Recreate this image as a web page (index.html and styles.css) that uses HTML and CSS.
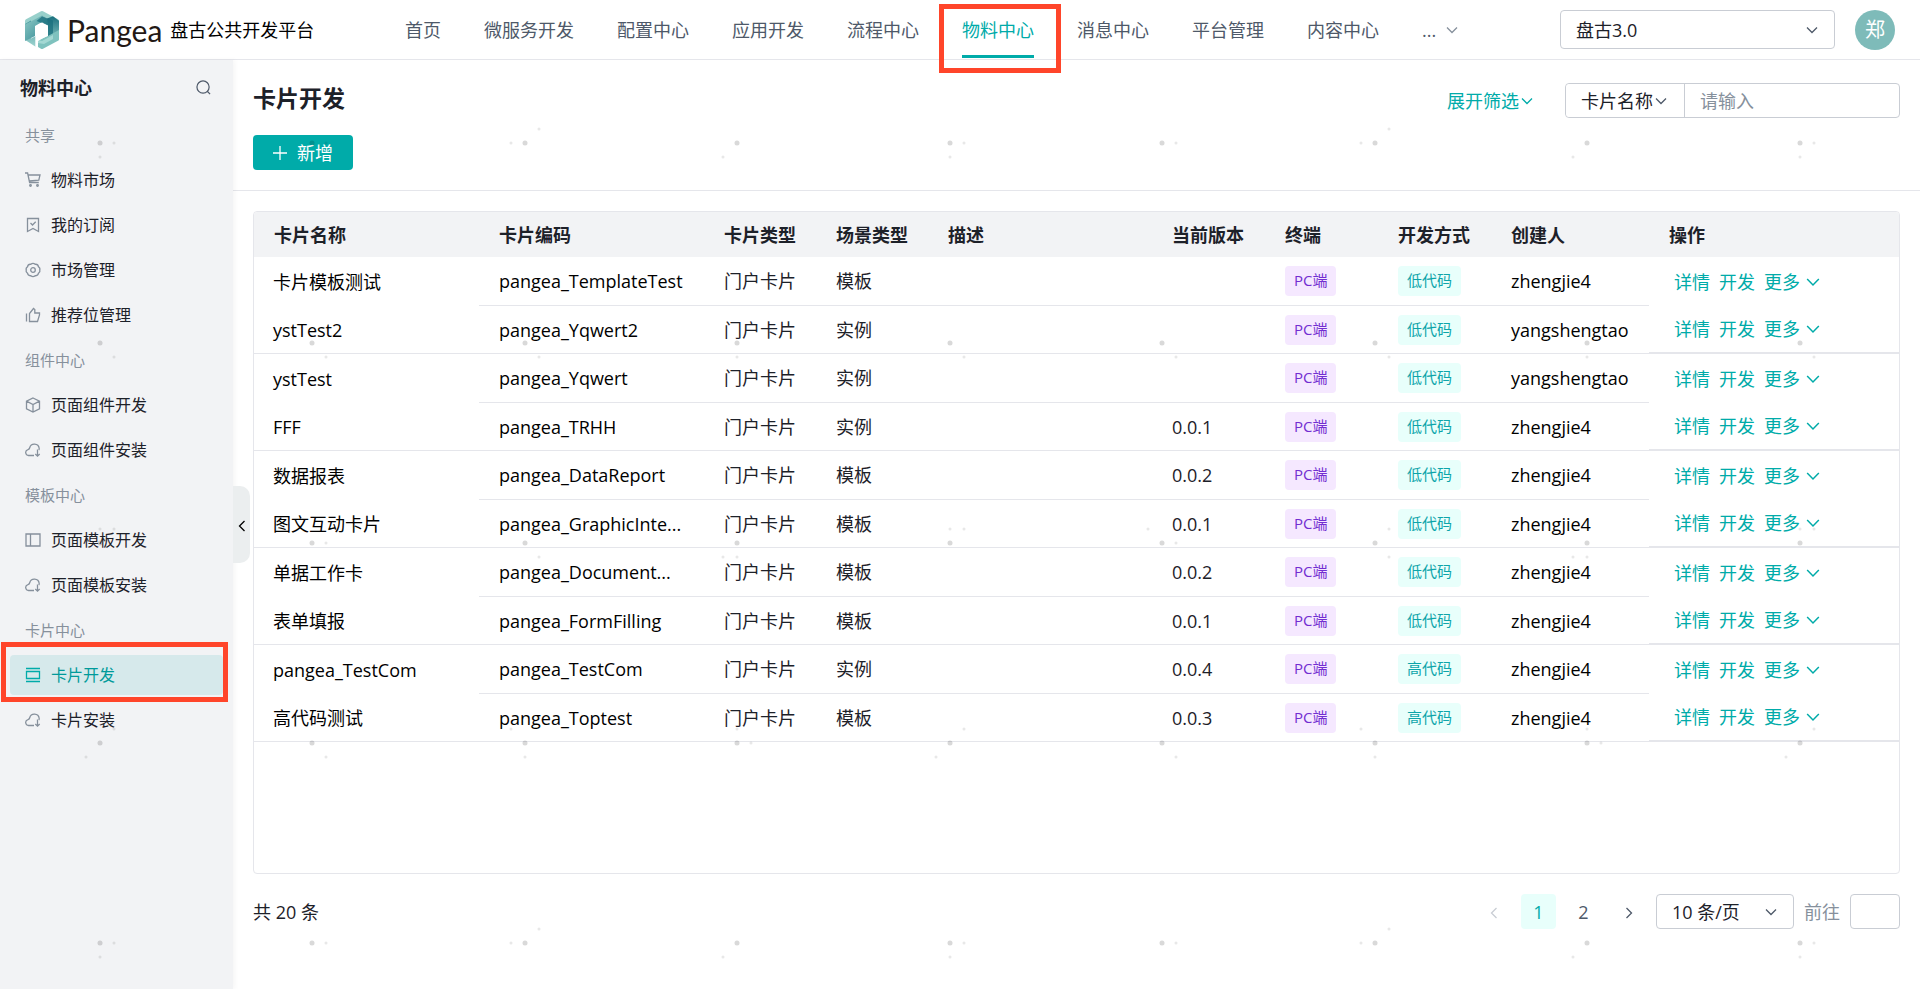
FILE: index.html
```html
<!DOCTYPE html>
<html lang="zh-CN">
<head>
<meta charset="UTF-8">
<title>卡片开发</title>
<link rel="stylesheet" href="styles.css">
</head>
<body>
<!-- 图标 -->
<svg class="sprite" aria-hidden="true">
  <symbol id="down" viewBox="0 0 12 12"><path d="M1 3.5l5 5 5-5"/></symbol>
  <symbol id="left" viewBox="0 0 12 12"><path d="M8.5 1l-5 5 5 5"/></symbol>
  <symbol id="right" viewBox="0 0 12 12"><path d="M3.5 1l5 5-5 5"/></symbol>
  <symbol id="search" viewBox="0 0 16 16"><circle cx="7.5" cy="7.5" r="6.5"/><path d="M12 12l3 3"/></symbol>
  <symbol id="cart" viewBox="0 0 16 16"><path d="M0 1h2.6l2 9.5h9.2M3 3h12l-1.2 5.2L4.2 9"/><circle cx="5.5" cy="13.5" r=".8"/><circle cx="12.5" cy="13.5" r=".8"/></symbol>
  <symbol id="mark" viewBox="0 0 16 16"><path d="M2.5 1.5h11v13L8 11.5l-5.500 3zM5.500 6l2 2 3.200-3.200"/></symbol>
  <symbol id="gear" viewBox="0 0 16 16"><path d="M5.800 2.300Q8 .4 10.200 2.300 13 2 13.500 4.800 15.600 6.500 14.600 8 15.600 9.500 13.500 11.200 13 14 10.200 13.700 8 15.600 5.800 13.700 3 14 2.500 11.200.4 9.500 1.400 8 .4 6.500 2.500 4.800 3 2 5.800 2.300z"/><circle cx="8" cy="8" r="2.300"/></symbol>
  <symbol id="thumb" viewBox="0 0 16 16"><path d="M1.500 6.500v8M4.500 6.500v8h8l2-6.500V6H9.800V2.500L8.500 1.500z"/></symbol>
  <symbol id="cube" viewBox="0 0 16 16"><path d="M8 1l6.500 3.200v7.600L8 15l-6.500-3.200V4.200zM1.500 4.200L8 7.500l6.500-3.300M8 7.500V15"/></symbol>
  <symbol id="cloud" viewBox="0 0 16 16"><path d="M9 13.500H4a3 3 0 0 1-1-5.900C4 7.400 4.500 7 4.800 5.500 6 .9 13.500.9 14.200 6.500c0 .6 0 1-.4 1.500M12.500 7.500v6.500M10.300 12l2.200 2.200 2.200-2.200"/></symbol>
  <symbol id="panel" viewBox="0 0 16 16"><path d="M1 2h14v12H1zM5.500 2v12"/></symbol>
  <symbol id="card" viewBox="0 0 16 16"><path d="M1 1.500h14M1 14.500h14M1.500 4.500h13v7h-13z"/></symbol>
</svg>

<header class="topbar">
  <a class="brand" href="#">
    <svg class="logo" viewBox="0 0 34 38">
      <defs>
        <linearGradient id="g1" x1="0" y1="0" x2="1" y2="1"><stop offset="0" stop-color="#8fcac6"/><stop offset="1" stop-color="#2d8590"/></linearGradient>
        <linearGradient id="g2" x1="0" y1="0" x2="0" y2="1"><stop offset="0" stop-color="#1a6f7e"/><stop offset="1" stop-color="#8bc9c4"/></linearGradient>
        <linearGradient id="g3" x1="0" y1="0" x2="0" y2="1"><stop offset="0" stop-color="#3e929a"/><stop offset="1" stop-color="#a0d5d0"/></linearGradient>
      </defs>
      <path fill="#98d0cb" d="M16 .3q1-.5 2 0l15 8q1 .6 1 2v3L17 5 0 14v-4q0-1.200 1-1.800z"/>
      <path fill="url(#g3)" d="M0 13l6-3.500v18L11 25v11L1 29.500q-1-.7-1-2z"/>
      <path fill="url(#g1)" d="M0 13.500L17 4.500l7 4v6L17 11l-7 4v10L0 30z"/>
      <path fill="url(#g2)" d="M22 7.500l6-2.200 6 4.500V28q0 1-1 1.600L23 31V13.500z"/>
      <path fill="#1a6f7e" d="M17 5.500l11 4v13.500l-5 3.500V14.500L11.500 10z" opacity=".75"/>
      <path fill="#7fc2be" d="M34 19v9q0 1.200-1 1.800l-15 8q-1 .5-2 0l-3-1.800V29l10-4z"/>
      <path fill="#a4d8d3" d="M13 29l4 1 11-6v4l-9 5-6-1z"/>
      <path fill="#fff" d="M17 11.500l6 3.500v9.500L13 30l-1.500-2v10l-1.200-.8V15.500z"/>
    </svg>
    <span class="wordmark">Pangea</span>
    <span class="brand-name">盘古公共开发平台</span>
  </a>
  <nav class="topnav">
    <a href="#">首页</a>
    <a href="#">微服务开发</a>
    <a href="#">配置中心</a>
    <a href="#">应用开发</a>
    <a href="#">流程中心</a>
    <a href="#" class="active">物料中心</a>
    <a href="#">消息中心</a>
    <a href="#">平台管理</a>
    <a href="#">内容中心</a>
    <a href="#" class="more">... <svg class="ico"><use href="#down"/></svg></a>
  </nav>
  <div class="select tenant">
    <select aria-label="租户"><option>盘古3.0</option></select>
    <svg class="ico"><use href="#down"/></svg>
  </div>
  <span class="avatar">郑</span>
</header>

<div class="layout">
  <aside class="sidebar">
    <div class="side-head">
      <h2>物料中心</h2>
      <button class="icon-btn" aria-label="搜索"><svg class="ico"><use href="#search"/></svg></button>
    </div>
    <nav class="menu">
      <span class="group">共享</span>
      <a href="#"><svg class="ico"><use href="#cart"/></svg>物料市场</a>
      <a href="#"><svg class="ico"><use href="#mark"/></svg>我的订阅</a>
      <a href="#"><svg class="ico"><use href="#gear"/></svg>市场管理</a>
      <a href="#"><svg class="ico"><use href="#thumb"/></svg>推荐位管理</a>
      <span class="group">组件中心</span>
      <a href="#"><svg class="ico"><use href="#cube"/></svg>页面组件开发</a>
      <a href="#"><svg class="ico"><use href="#cloud"/></svg>页面组件安装</a>
      <span class="group">模板中心</span>
      <a href="#"><svg class="ico"><use href="#panel"/></svg>页面模板开发</a>
      <a href="#"><svg class="ico"><use href="#cloud"/></svg>页面模板安装</a>
      <span class="group">卡片中心</span>
      <a href="#" class="active"><svg class="ico"><use href="#card"/></svg>卡片开发</a>
      <a href="#"><svg class="ico"><use href="#cloud"/></svg>卡片安装</a>
    </nav>
    <button class="collapse" aria-label="收起"><svg class="ico"><use href="#left"/></svg></button>
  </aside>

  <main class="main">
    <section class="page-head">
      <div class="head-row">
        <h1>卡片开发</h1>
        <a href="#" class="expand">展开筛选<svg class="ico"><use href="#down"/></svg></a>
        <div class="filter">
          <div class="select">
            <select aria-label="筛选字段"><option>卡片名称</option></select>
            <svg class="ico"><use href="#down"/></svg>
          </div>
          <input type="text" placeholder="请输入" aria-label="筛选内容">
        </div>
      </div>
      <button class="btn-add"><svg class="ico" viewBox="0 0 14 14"><path d="M7 0v14M0 7h14"/></svg>新增</button>
    </section>

    <section class="content">
      <div class="table-box">
        <table>
          <colgroup>
            <col class="w-name"><col class="w-name"><col class="w-type"><col class="w-type"><col>
            <col class="w-short"><col class="w-short"><col class="w-short"><col class="w-user"><col class="w-ops">
          </colgroup>
          <thead>
            <tr><th>卡片名称</th><th>卡片编码</th><th>卡片类型</th><th>场景类型</th><th>描述</th><th>当前版本</th><th>终端</th><th>开发方式</th><th>创建人</th><th>操作</th></tr>
          </thead>
          <tbody id="tbody"></tbody>
        </table>
      </div>
      <div class="pager">
        <span class="total">共 20 条</span>
        <button class="page prev" aria-label="上一页" disabled><svg class="ico"><use href="#left"/></svg></button>
        <button class="page current">1</button>
        <button class="page">2</button>
        <button class="page" aria-label="下一页"><svg class="ico"><use href="#right"/></svg></button>
        <div class="select size">
          <select aria-label="每页条数"><option>10 条/页</option></select>
          <svg class="ico"><use href="#down"/></svg>
        </div>
        <label for="goto">前往</label>
        <input type="text" id="goto">
      </div>
    </section>
  </main>
</div>

<!-- 点阵水印 -->
<svg class="watermark" aria-hidden="true">
  <defs>
    <pattern id="dots" width="850" height="800" patternUnits="userSpaceOnUse"></pattern>
  </defs>
  <rect width="100%" height="100%" fill="url(#dots)"/>
</svg>

<script>
const cards = [
  ["卡片模板测试", "pangea_TemplateTest", "模板", "", "低代码", "zhengjie4"],
  ["ystTest2", "pangea_Yqwert2", "实例", "", "低代码", "yangshengtao"],
  ["ystTest", "pangea_Yqwert", "实例", "", "低代码", "yangshengtao"],
  ["FFF", "pangea_TRHH", "实例", "0.0.1", "低代码", "zhengjie4"],
  ["数据报表", "pangea_DataReport", "模板", "0.0.2", "低代码", "zhengjie4"],
  ["图文互动卡片", "pangea_GraphicInte...", "模板", "0.0.1", "低代码", "zhengjie4"],
  ["单据工作卡", "pangea_Document...", "模板", "0.0.2", "低代码", "zhengjie4"],
  ["表单填报", "pangea_FormFilling", "模板", "0.0.1", "低代码", "zhengjie4"],
  ["pangea_TestCom", "pangea_TestCom", "实例", "0.0.4", "高代码", "zhengjie4"],
  ["高代码测试", "pangea_Toptest", "模板", "0.0.3", "高代码", "zhengjie4"]
];

document.getElementById("tbody").innerHTML = cards.map(([name, code, scene, version, mode, user]) => `
  <tr>
    <td>${name}</td><td>${code}</td><td class="soft">门户卡片</td><td class="soft">${scene}</td><td></td><td class="soft">${version}</td>
    <td><span class="tag purple">PC端</span></td><td><span class="tag cyan">${mode}</span></td><td>${user}</td>
    <td><div class="ops"><a href="#">详情</a><a href="#">开发</a><a href="#">更多<svg class="ico"><use href="#down"/></svg></a></div></td>
  </tr>`).join("");

// 每个主点周围的小点方向，4 x 4 循环
const marks = [
  ["E S", "E", "W NE", "SW"],
  ["SE", "SE", "SE", "S"],
  ["N NE", "NW E", "NE SE", "SW S"],
  ["NE SW", "SE", "NW S", "N E"]
];
const dot = (x, y, r, o) => `<circle cx="${x}" cy="${y}" r="${r}" fill-opacity="${o}"/>`;
let dots = "";
marks.forEach((row, j) => row.forEach((dirs, i) => {
  const x = Math.floor(100 + i * 212.5), y = 143 + j * 200;
  dots += dot(x, y, 2.5, .15);
  dirs.split(" ").forEach(d => {
    const dx = d.includes("E") ? 14 : d.includes("W") ? -14 : 0;
    const dy = d.includes("S") ? 14 : d.includes("N") ? -14 : 0;
    dots += dot(x + dx, y + dy, 1.5, .09);
  });
}));
document.getElementById("dots").innerHTML = dots;
</script>
</body>
</html>
```

FILE: styles.css
```css
*{box-sizing:border-box}
body{margin:0;min-height:100vh;display:flex;flex-direction:column;background:#fff;color:#1d2129;font:18px/24px "Open Sans","Noto Sans CJK SC",sans-serif}
h1,h2{margin:0}
a{color:inherit;text-decoration:none}
button,input,select{font:inherit;color:inherit;margin:0}
button{border:0;background:none;padding:0;cursor:pointer}
.sprite{position:absolute;width:0;height:0}
.ico{width:12px;height:12px;flex:none;fill:none;stroke:currentColor;stroke-width:1.3}

/* 顶栏 */
.topbar{display:flex;align-items:center;height:60px;padding:0 25px;border-bottom:1px solid #e5e6eb}
.brand{display:flex;align-items:center;width:380px;color:#000}
.logo{width:34px;height:38px}
.wordmark{font:30px/36px Lato,sans-serif;color:#231815;margin:0 8px}
.topnav{display:flex;align-items:stretch;align-self:stretch;gap:43px;color:#4e5969}
.topnav a{display:flex;align-items:center;position:relative;white-space:nowrap}
.topnav .active{color:#00aba9}
.topnav .active::before{content:"";position:absolute;left:0;right:0;bottom:1px;height:3px;background:#00aba9}
.topnav .active::after{content:"";position:absolute;inset:4px -27px -14px -23px;border:5px solid #ff452a}
.more{gap:10px}
.more .ico{color:#86909c}

.select{position:relative;display:flex}
.select select{appearance:none;width:100%;background:#fff;border:1px solid #c9cdd4;border-radius:4px;outline:0}
.select .ico{position:absolute;top:0;bottom:0;right:17px;margin:auto;color:#4e5969;pointer-events:none}
.tenant{width:275px;margin-left:auto}
.tenant select{height:39px;padding:0 15px}
.avatar{width:40px;height:40px;margin-left:20px;border-radius:50%;background:#7ebbb9;color:#fff;font-size:20px;line-height:40px;text-align:center}

.layout{flex:1;display:flex}

/* 侧边菜单 */
.sidebar{position:relative;width:233px;flex:none;background:#f2f3f5;box-shadow:2px 0 5px rgba(0,0,0,.04)}
.side-head{display:flex;justify-content:space-between;align-items:center;height:55px;padding:0 22px 0 20px}
.side-head h2{font-size:18px}
.icon-btn{display:flex;color:#4e5969}
.icon-btn .ico{width:15px;height:15px}
.menu{display:flex;flex-direction:column;gap:5px;padding:0 10px;font-size:16px}
.menu a,.group{display:flex;align-items:center;height:40px;padding:0 15px;border-radius:4px;position:relative}
.group{color:#86909c;font-size:15px}
.menu .ico{width:16px;height:16px;margin-right:10px;color:#86909c}
.menu .active{background:#d6e9eb;color:#009a9a}
.menu .active .ico{color:#00aba9}
.menu .active::after{content:"";position:absolute;inset:-13px -5px -7px -9px;border:5px solid #ff452a}
.collapse{position:absolute;left:100%;top:426px;width:17px;height:77px;background:#ebeeef;border-radius:0 10px 10px 0;color:#000}

/* 页头 */
.main{flex:1;min-width:0;display:flex;flex-direction:column}
.page-head{padding:23px 20px 20px;border-bottom:1px solid #e5e6eb}
.head-row{display:flex;align-items:center;height:35px;margin-bottom:17px}
.head-row h1{align-self:flex-start;font-size:23px;line-height:30px}
.expand{display:flex;align-items:center;gap:2px;margin:0 32px 0 auto;color:#00aba9}
.filter{display:flex;width:335px;height:35px;border:1px solid #c9cdd4;border-radius:4px}
.filter .select{width:119px;border-right:1px solid #c9cdd4}
.filter select{border:0;padding:0 15px}
.filter input{flex:1;min-width:0;border:0;background:none;padding:0 15px;outline:0}
.filter input::placeholder{color:#86909c}
.btn-add{display:flex;align-items:center;gap:10px;height:35px;padding:0 20px;border-radius:4px;background:#00aba9;color:#fff}
.btn-add .ico{width:14px;height:14px}

/* 表格 */
.content{flex:1;display:flex;flex-direction:column;padding:20px 20px 60px}
.table-box{flex:1;border:1px solid #e5e6eb;border-radius:4px;overflow:hidden}
table{width:100%;table-layout:fixed;border-collapse:separate;border-spacing:0}
.w-name{width:225px}
.w-type{width:112px}
.w-short{width:113px}
.w-user{width:158px}
.w-ops{width:250px}
th,td{padding:0 20px;text-align:left;white-space:nowrap}
th{height:45px;background:#f2f3f5}
td{height:49px;border-bottom:1px solid #e5e6eb;color:#000}
td.soft{color:#1d2129}
tr:nth-child(even) td{height:48px}
tr:nth-child(odd) td:first-child,tr:nth-child(odd) td:last-child{border-bottom:0}
tr:nth-child(even) td:last-child{border-bottom-width:2px}
td:first-child{padding-left:19px}
td:last-child{padding-left:25px}
td:nth-child(2){padding-right:0}
.tag{display:inline-block;height:30px;padding:0 9px;border-radius:4px;font-size:15px;line-height:29px;vertical-align:middle}
.purple{background:#f5e8ff;color:#722ed1}
.cyan{background:#e8fffb;color:#0da5aa}
.ops{display:flex;gap:9px;color:#00aba9}
.ops a{display:flex;align-items:center;gap:6px}
.ops .ico{width:14px;height:14px}

/* 分页 */
.pager{display:flex;align-items:center;gap:10px;margin-top:20px}
.total{margin-right:auto}
.page{width:35px;height:35px;border-radius:4px;color:#4e5969}
.page.current{background:#e8fffb;color:#00aba9}
.page.prev{color:#c9cdd4}
.size{width:138px}
.size select{height:35px;padding:0 15px}
.pager label{color:#86909c}
.pager input{width:50px;height:35px;border:1px solid #c9cdd4;border-radius:4px;padding:0 8px;background:none}

.watermark{position:fixed;inset:0;width:100%;height:100%;pointer-events:none}
```
